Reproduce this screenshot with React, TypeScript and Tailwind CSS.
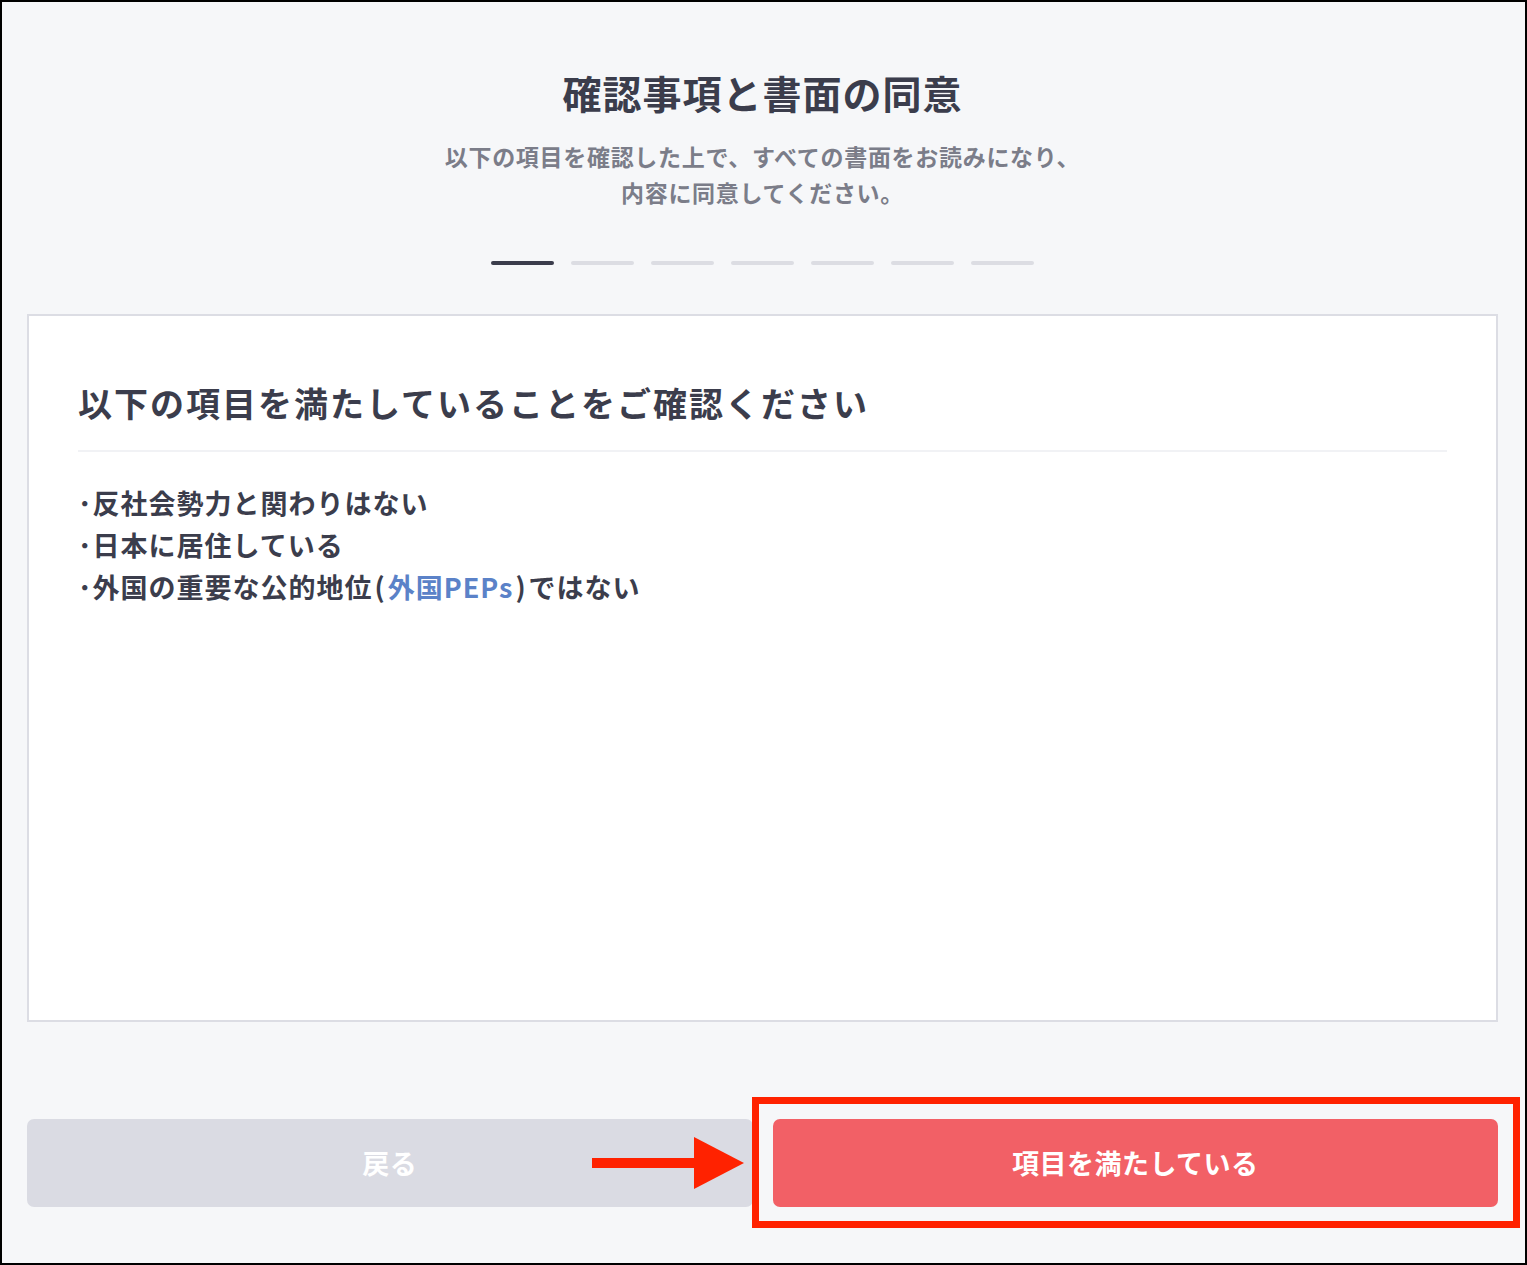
import React from "react";

const steps = [true, false, false, false, false, false, false];

const App = () => {
  return (
    <div
      className="relative flex h-[1265px] w-full flex-col border-2 border-black bg-[#f6f7f9] pl-[25px] pr-[27px] text-[#3b3d4c]"
      style={{ fontFamily: '"Noto Sans CJK JP", "Noto Sans", sans-serif' }}
    >
      <h1 className="mt-[60px] text-center text-[39px] font-bold leading-[60px] tracking-[1px]">
        確認事項と書面の同意
      </h1>
      <p className="mt-[16px] text-center text-[23px] font-bold leading-[36px] tracking-[0.7px] text-[#7b7d89]">
        以下の項目を確認した上で、すべての書面をお読みになり、
        <br />
        内容に同意してください。
      </p>

      <div className="mt-[51px] flex justify-center gap-[17px]">
        {steps.map((active, i) => (
          <span
            key={i}
            className={
              active
                ? "h-[4px] w-[63px] rounded-full bg-[#3b3d4c]"
                : "h-[4px] w-[63px] rounded-full bg-[#dcdde3]"
            }
          />
        ))}
      </div>

      <section className="mt-[49px] h-[708px] border-2 border-[#dcdde4] bg-white px-[49px] pt-[62px]">
        <h2 className="text-[34px] font-bold leading-[50px] tracking-[2px]">
          以下の項目を満たしていることをご確認ください
        </h2>
        <div className="mt-[22px] h-[2px] bg-[#f1f2f5]" />
        <ul className="mt-[30px] text-[27px] font-bold leading-[42px] tracking-[1px]">
          <li>･反社会勢力と関わりはない</li>
          <li>･日本に居住している</li>
          <li>
            ･外国の重要な公的地位<span className="mx-[2px]">(</span>
            <span className="text-[#5b82c8]">外国PEPs</span>
            <span className="mx-[2px]">)</span>ではない
          </li>
        </ul>
      </section>

      <div className="mt-[97px] flex gap-[20px]">
        <button className="h-[88px] flex-1 rounded-[7px] bg-[#dadbe3] text-[27px] font-bold tracking-[0.5px] text-white">
          戻る
        </button>
        <button className="h-[88px] flex-1 rounded-[7px] bg-[#f26066] text-[27px] font-bold tracking-[0.5px] text-white">
          項目を満たしている
        </button>
      </div>

      {/* annotation overlay */}
      <div className="pointer-events-none absolute left-[750px] top-[1095px] h-[131px] w-[768px] border-[7px] border-[#ff2200]" />
      <svg
        className="pointer-events-none absolute left-[590px] top-[1133px]"
        width="154"
        height="56"
        viewBox="0 0 154 56"
      >
        <rect x="0" y="23" width="104" height="10" fill="#ff2200" />
        <polygon points="102,2 152,28 102,54" fill="#ff2200" />
      </svg>
    </div>
  );
};

export default App;
